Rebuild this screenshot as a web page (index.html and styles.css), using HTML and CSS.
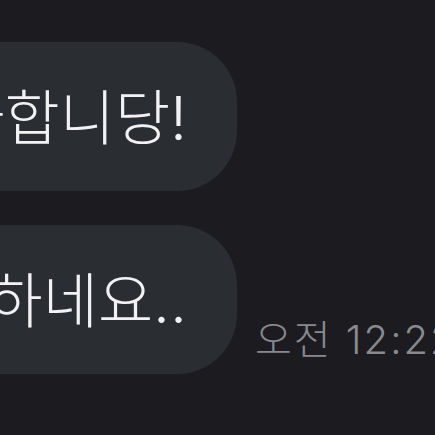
FILE: index.html
```html
<!DOCTYPE html>
<html>
<head>
    <title>Chat</title>
    <link rel="stylesheet" href="styles.css">
</head>
<body>
    <div class="chat">
        <div class="row">
            <div class="bubble">감사합니당!</div>
        </div>
        <div class="row">
            <div class="bubble">진짜 대단하네요..</div>
            <div class="time">오전 12:22</div>
        </div>
    </div>
</body>
</html>
```

FILE: styles.css
```css
body {
    background-color: #1c1c20;
    margin: 0;
    overflow: hidden;
    font-family: Inter, "Noto Sans CJK KR", sans-serif;
}

.chat {
    display: flex;
    flex-direction: column;
    gap: 34px;
    padding-top: 42px;
}

.row {
    display: flex;
    align-items: flex-end;
}

.bubble {
    flex: 0 0 auto;
    width: 537px;
    height: 149px;
    margin-left: -300px;
    box-sizing: border-box;
    padding-right: 50px;
    padding-bottom: 6px;
    display: flex;
    align-items: center;
    justify-content: flex-end;
    white-space: nowrap;
    background-color: #2a2d32;
    border-radius: 60px;
    color: #f2f2f4;
    font-size: 60px;
    font-weight: 300;
}

.time {
    flex: 0 0 auto;
    margin-left: 18px;
    margin-bottom: 8px;
    white-space: nowrap;
    color: #8a8a8e;
    font-size: 40px;
    font-weight: 300;
    letter-spacing: 2px;
}
```
